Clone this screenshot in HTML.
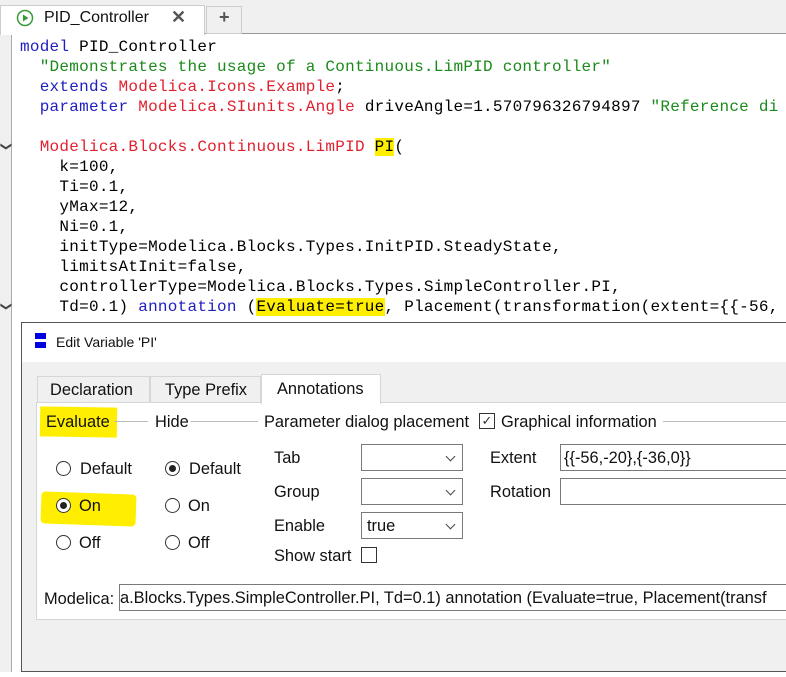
<!DOCTYPE html>
<html><head><meta charset="utf-8"><style>
*{margin:0;padding:0;box-sizing:border-box}
body{width:786px;height:677px;overflow:hidden;background:#fff;position:relative;font-family:"Liberation Sans",sans-serif}
.a{position:absolute;white-space:nowrap}
.code{font-family:"Liberation Mono",monospace;font-size:16px;letter-spacing:.25px;line-height:20px;color:#000}
.code div{white-space:pre;height:20px}
.k{color:#2020c0}.t{color:#e0202e}.s{color:#1a8a1a}
.hl{background:#ffee00}
.ui{font-size:16.4px;color:#111}
.rb{position:absolute;width:15px;height:15px;border:1px solid #333;border-radius:50%;background:#fff}
.rb.on::after{content:"";position:absolute;left:3px;top:3px;width:7px;height:7px;border-radius:50%;background:#222}
.box{position:absolute;border:1px solid #7a7a7a;background:#fff}
.dd::after{content:"";position:absolute;right:8px;top:8px;width:6px;height:6px;border-right:1px solid #444;border-bottom:1px solid #444;transform:rotate(45deg)}
</style></head><body>
<div class="a" style="left:0;top:0;width:786px;height:34px;background:#f0f0f0;border-bottom:1px solid #999"></div>
<div class="a" style="left:0;top:5px;width:205px;height:30px;background:#fff;border:1px solid #ccc;border-bottom:none"></div>
<div class="a" style="left:206px;top:6px;width:36px;height:28px;background:#f0f0f0;border:1px solid #ccc"></div>
<svg class="a" style="left:16px;top:9px" width="18" height="18"><circle cx="9" cy="9" r="7.5" fill="#fff" stroke="#3a9a3a" stroke-width="1.5"/><path d="M7 5.5L12.5 9L7 12.5Z" fill="#3a9a3a"/></svg>
<div class="a ui" style="left:44px;top:9px;font-size:16px">PID_Controller</div>
<div class="a" style="left:171px;top:7px;font-size:18px;color:#555;font-weight:bold">✕</div>
<div class="a" style="left:219px;top:7px;font-size:18px;color:#555;font-weight:bold">+</div>
<div class="a" style="left:0;top:35px;width:12px;height:642px;background:#f0f0f0;border-right:1px solid #aaa"></div>
<div class="a" style="left:2px;top:140px;font-size:11px;color:#444;transform:rotate(90deg)">❯</div>
<div class="a" style="left:2px;top:300px;font-size:11px;color:#444;transform:rotate(90deg)">❯</div>
<div class="code a" style="left:20px;top:37px"><div><span class="k">model</span> PID_Controller</div><div>  <span class="s">"Demonstrates the usage of a Continuous.LimPID controller"</span></div><div>  <span class="k">extends</span> <span class="t">Modelica.Icons.Example</span>;</div><div>  <span class="k">parameter</span> <span class="t">Modelica.SIunits.Angle</span> driveAngle=1.570796326794897 <span class="s">"Reference di</span></div><div> </div><div>  <span class="t">Modelica.Blocks.Continuous.LimPID</span> <span class="hl">PI</span>(</div><div>    k=100,</div><div>    Ti=0.1,</div><div>    yMax=12,</div><div>    Ni=0.1,</div><div>    initType=Modelica.Blocks.Types.InitPID.SteadyState,</div><div>    limitsAtInit=false,</div><div>    controllerType=Modelica.Blocks.Types.SimpleController.PI,</div><div>    Td=0.1) <span class="k">annotation</span> (<span class="hl">Evaluate=true</span>, Placement(transformation(extent={{-56,</div></div>
<div class="a" style="left:21px;top:322px;width:770px;height:350px;background:#f0f0f0;border:1px solid #555"></div>
<div class="a" style="left:22px;top:323px;width:770px;height:39px;background:#fff"></div>
<div class="a" style="left:35px;top:333px;width:11px;height:6px;background:#0000e0"></div>
<div class="a" style="left:35px;top:342px;width:11px;height:6px;background:#0000e0"></div>
<div class="a ui" style="left:56px;top:334px;font-size:14px">Edit Variable 'PI'</div>
<div class="a" style="left:37px;top:376px;width:113px;height:27px;background:#f0f0f0;border:1px solid #d6d6d6"></div>
<div class="a" style="left:150px;top:376px;width:111px;height:27px;background:#f0f0f0;border:1px solid #d6d6d6"></div>
<div class="a" style="left:36px;top:402px;width:760px;height:218px;background:#fff;border:1px solid #d6d6d6"></div>
<div class="a" style="left:261px;top:374px;width:120px;height:30px;background:#fff;border:1px solid #d6d6d6;border-bottom:none"></div>
<div class="a ui" style="left:50px;top:381px">Declaration</div>
<div class="a ui" style="left:165px;top:381px">Type Prefix</div>
<div class="a ui" style="left:277px;top:380px">Annotations</div>
<div class="a hl" style="left:40px;top:407px;width:77px;height:30px;transform:rotate(1deg)"></div>
<div class="a ui" style="left:46px;top:413px">Evaluate</div>
<div class="a" style="left:114px;top:421px;width:34px;height:1px;background:#bbb"></div>
<div class="a ui" style="left:155px;top:413px">Hide</div>
<div class="a" style="left:191px;top:421px;width:67px;height:1px;background:#bbb"></div>
<div class="a ui" style="left:264px;top:413px">Parameter dialog placement</div>
<div class="a" style="left:479px;top:413px;width:16px;height:16px;border:1px solid #333;background:#fff;font-size:13px;line-height:14px;text-align:center;color:#333">✓</div>
<div class="a ui" style="left:501px;top:413px">Graphical information</div>
<div class="a" style="left:663px;top:421px;width:123px;height:1px;background:#bbb"></div>
<div class="a hl" style="left:41px;top:493px;width:95px;height:32px;border-radius:4px;transform:rotate(2deg)"></div>
<div class="rb" style="left:56px;top:461px"></div><div class="a ui" style="left:80px;top:460px">Default</div>
<div class="rb on" style="left:56px;top:498px"></div><div class="a ui" style="left:79px;top:497px">On</div>
<div class="rb" style="left:56px;top:535px"></div><div class="a ui" style="left:79px;top:534px">Off</div>
<div class="rb on" style="left:165px;top:461px"></div><div class="a ui" style="left:189px;top:460px">Default</div>
<div class="rb" style="left:165px;top:498px"></div><div class="a ui" style="left:188px;top:497px">On</div>
<div class="rb" style="left:165px;top:535px"></div><div class="a ui" style="left:188px;top:534px">Off</div>
<div class="a ui" style="left:274px;top:449px">Tab</div>
<div class="a ui" style="left:274px;top:483px">Group</div>
<div class="a ui" style="left:274px;top:517px">Enable</div>
<div class="a ui" style="left:274px;top:547px">Show start</div>
<div class="a" style="left:361px;top:547px;width:16px;height:16px;border:1px solid #333;background:#fff"></div>
<div class="box dd" style="left:361px;top:444px;width:102px;height:27px"></div>
<div class="box dd" style="left:361px;top:478px;width:102px;height:27px"></div>
<div class="box dd" style="left:361px;top:512px;width:102px;height:27px"><span class="ui" style="position:absolute;left:5px;top:4px">true</span></div>
<div class="a ui" style="left:490px;top:449px">Extent</div>
<div class="a ui" style="left:490px;top:483px">Rotation</div>
<div class="box" style="left:560px;top:444px;width:230px;height:27px"><span class="ui" style="position:absolute;left:3px;top:4px">{{-56,-20},{-36,0}}</span></div>
<div class="box" style="left:560px;top:478px;width:230px;height:27px"></div>
<div class="a ui" style="left:44px;top:590px">Modelica:</div>
<div class="box" style="left:119px;top:584px;width:680px;height:27px;overflow:hidden"><span class="ui" style="position:absolute;left:0;top:4px;white-space:nowrap">a.Blocks.Types.SimpleController.PI, Td=0.1) annotation (Evaluate=true, Placement(transf</span></div>
<div class="a" style="left:0;top:672px;width:786px;height:5px;background:#fff"></div>
</body></html>
